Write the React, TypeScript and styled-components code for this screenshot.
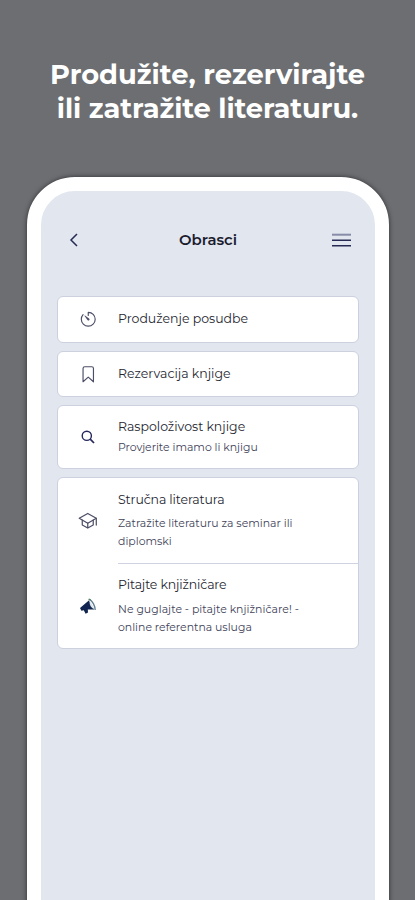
import React from 'react';
import styled, { createGlobalStyle } from 'styled-components';
import { IoTimerOutline, IoBookmarkOutline, IoSchoolOutline } from 'react-icons/io5';

const GlobalStyle = createGlobalStyle`
  * { box-sizing: border-box; }
  body { margin: 0; background: #6d6e72; }
`;

const Page = styled.main`
  width: 415px;
  height: 900px;
  overflow: hidden;
  background: #6d6e72;
  font-family: Montserrat, Inter, sans-serif;
  display: flex;
  flex-direction: column;
  align-items: center;
`;

const Headline = styled.h1`
  margin: 0;
  height: 177px;
  padding-top: 57.5px;
  font-size: 27.3px;
  line-height: 34.5px;
  font-weight: 700;
  color: #fff;
  text-align: center;
  flex: none;
`;

const Line = styled.span<{ $track?: number }>`
  display: block;
  white-space: nowrap;
  letter-spacing: ${(p) => p.$track ?? 0}px;
`;

const Phone = styled.section`
  width: 362px;
  height: 780px;
  flex: none;
  margin-left: 1px;
  border: 14px solid #fff;
  border-radius: 48px;
  background: #e2e6ef;
  box-shadow: 0 0 5px rgba(0, 0, 0, 0.6);
`;

const TopBar = styled.header`
  height: 105.3px;
  padding: 34px 24px 0 26px;
  display: flex;
  align-items: flex-start;
  justify-content: space-between;
`;

const Title = styled.h2`
  margin: 0 0 0 3px;
  font-size: 14.9px;
  line-height: 30px;
  font-weight: 600;
  color: #1b1c2e;
`;

const BarIcon = styled.button`
  display: flex;
  align-items: center;
  height: 30px;
  padding: 0;
  border: 0;
  background: none;
  color: #262a55;
`;

const List = styled.div`
  margin: 0 16px;
  display: flex;
  flex-direction: column;
  gap: 8px;
`;

const Card = styled.div<{ $height: number }>`
  height: ${(p) => p.$height}px;
  display: flex;
  flex-direction: column;
  background: #fff;
  border: 1px solid #ccd0df;
  border-radius: 6px;
`;

const Row = styled.div`
  flex: 1;
  display: grid;
  grid-template-columns: 60px 1fr;
  align-items: center;
  & + & > :last-child { border-top: 1px solid #cfd2e0; }
`;

const IconCell = styled.span<{ $color: string }>`
  display: flex;
  justify-content: center;
  color: ${(p) => p.$color};
`;

const TextCell = styled.div`
  align-self: stretch;
  display: flex;
  flex-direction: column;
  justify-content: center;
`;

const Label = styled.div`
  font-size: 12.5px;
  line-height: 18px;
  color: #25262f;
`;

const Note = styled.div<{ $gap: number }>`
  margin-top: ${(p) => p.$gap}px;
  font-size: 10.9px;
  line-height: 18px;
  color: #414359;
`;

const SearchIcon = () => (
  <svg width="14" height="14" viewBox="0 0 14 14" fill="none" stroke="currentColor" strokeWidth="1.4">
    <circle cx="5.8" cy="5.8" r="4.6" />
    <path d="M9.2 9.2l3.8 3.8" strokeWidth="1.7" />
  </svg>
);

const MegaphoneIcon = () => (
  <svg width="18" height="20" viewBox="0 0 18 20" fill="currentColor">
    <path d="M1 12 9.8 4.6l5.4 9-6.4-.2.2 3-2.4 1.4-1.8-3.6-2.4.5z" />
    <path d="M10.6 5.6c2.4 2.2 3.8 4.6 4.2 7.6-2.8-1.4-4.4-4-4.2-7.6z" fill="#dce5ee" />
    <path d="M10.6 3.4c3 1.8 5.6 6.6 5.6 10.6" fill="none" stroke="#617e91" strokeWidth="1.3" />
    <path d="M9.6 3.2l2 .8" fill="none" stroke="#568264" strokeWidth="1.5" />
  </svg>
);

type Text = { text: string; track?: number };
type Entry = { icon: React.ReactNode; color?: string; label: Text; notes?: Text[] };

const cards: { height: number; entries: Entry[] }[] = [
  {
    height: 46.4,
    entries: [{ icon: <IoTimerOutline size={18.5} />, label: { text: 'Produženje posudbe' } }],
  },
  {
    height: 46.4,
    entries: [{ icon: <IoBookmarkOutline size={18.5} />, label: { text: 'Rezervacija knjige' } }],
  },
  {
    height: 64,
    entries: [
      {
        icon: <SearchIcon />,
        color: '#25275c',
        label: { text: 'Raspoloživost knjige' },
        notes: [{ text: 'Provjerite imamo li knjigu' }],
      },
    ],
  },
  {
    height: 172,
    entries: [
      {
        icon: <IoSchoolOutline size={19.5} />,
        label: { text: 'Stručna literatura', track: -0.12 },
        notes: [{ text: 'Zatražite literaturu za seminar ili' }, { text: 'diplomski' }],
      },
      {
        icon: <MegaphoneIcon />,
        color: '#10244f',
        label: { text: 'Pitajte knjižničare', track: -0.14 },
        notes: [
          { text: 'Ne guglajte - pitajte knjižničare! -', track: 0.03 },
          { text: 'online referentna usluga' },
        ],
      },
    ],
  },
];

export default function App() {
  return (
    <Page>
      <GlobalStyle />
      <Headline>
        <Line>Produžite, rezervirajte</Line>
        <Line $track={-0.1}>ili zatražite literaturu.</Line>
      </Headline>
      <Phone>
        <TopBar>
          <BarIcon aria-label="Natrag">
            <svg width="14" height="14" viewBox="0 0 14 14" fill="none" stroke="currentColor" strokeWidth="1.5">
              <path d="M10 1 4 7l6 6" />
            </svg>
          </BarIcon>
          <Title>Obrasci</Title>
          <BarIcon aria-label="Izbornik">
            <svg width="19" height="14" viewBox="0 0 19 14" fill="none" stroke="currentColor">
              <path d="M0 1.7h19" strokeWidth="2" stroke="#888ca8" />
              <path d="M0 7.3h19M0 12.8h19" strokeWidth="1.6" />
            </svg>
          </BarIcon>
        </TopBar>
        <List>
          {cards.map((card, i) => (
            <Card key={i} $height={card.height}>
              {card.entries.map((e) => (
                <Row key={e.label.text}>
                  <IconCell $color={e.color ?? '#4b4e66'}>{e.icon}</IconCell>
                  <TextCell>
                    <Label>
                      <Line $track={e.label.track}>{e.label.text}</Line>
                    </Label>
                    {e.notes && (
                      <Note $gap={e.notes.length > 1 ? 5.5 : 1.6}>
                        {e.notes.map((n) => (
                          <Line key={n.text} $track={n.track}>{n.text}</Line>
                        ))}
                      </Note>
                    )}
                  </TextCell>
                </Row>
              ))}
            </Card>
          ))}
        </List>
      </Phone>
    </Page>
  );
}
